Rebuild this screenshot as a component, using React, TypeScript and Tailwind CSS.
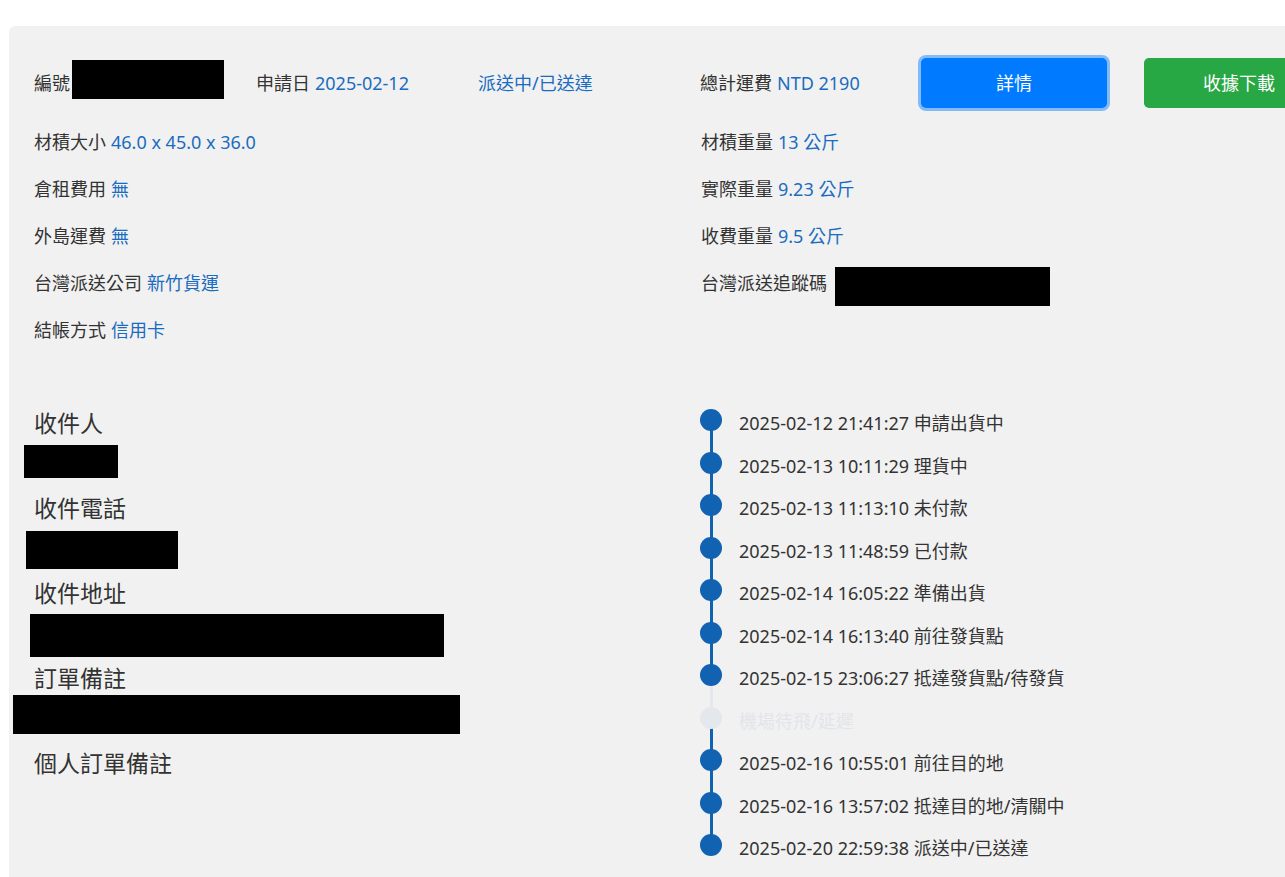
import React from "react"

const font = { fontFamily: '"Noto Sans", "Noto Sans CJK TC", sans-serif' }

type Step = { time?: string; label: string; done: boolean }

const steps: Step[] = [
  { time: "2025-02-12 21:41:27", label: "申請出貨中", done: true },
  { time: "2025-02-13 10:11:29", label: "理貨中", done: true },
  { time: "2025-02-13 11:13:10", label: "未付款", done: true },
  { time: "2025-02-13 11:48:59", label: "已付款", done: true },
  { time: "2025-02-14 16:05:22", label: "準備出貨", done: true },
  { time: "2025-02-14 16:13:40", label: "前往發貨點", done: true },
  { time: "2025-02-15 23:06:27", label: "抵達發貨點/待發貨", done: true },
  { label: "機場待飛/延遲", done: false },
  { time: "2025-02-16 10:55:01", label: "前往目的地", done: true },
  { time: "2025-02-16 13:57:02", label: "抵達目的地/清關中", done: true },
  { time: "2025-02-20 22:59:38", label: "派送中/已送達", done: true },
]

function Field({ label, value }: { label: string; value: string }) {
  return (
    <div className="flex h-[47px] items-center leading-none">
      <span className="text-[#333]">{label}</span>
      <span className="ml-[5px] text-[#1a6cc0]">{value}</span>
    </div>
  )
}

function Redact({ className }: { className: string }) {
  return <div className={`shrink-0 bg-black ${className}`} />
}

function Recipient() {
  return (
    <div className="pt-[4px] text-[23px] text-[#333]">
      <div className="h-[34px] leading-[34px]">收件人</div>
      <div className="flex h-[51px] flex-col">
        <Redact className="-ml-[10px] mt-[5px] h-[33px] w-[94px]" />
      </div>
      <div className="h-[34px] leading-[34px]">收件電話</div>
      <div className="flex h-[51px] flex-col">
        <Redact className="-ml-[8px] mt-[6px] h-[38px] w-[152px]" />
      </div>
      <div className="h-[34px] leading-[34px]">收件地址</div>
      <div className="flex h-[51px] flex-col">
        <Redact className="-ml-[4px] mt-[4px] h-[43px] w-[414px]" />
      </div>
      <div className="h-[34px] leading-[34px]">訂單備註</div>
      <div className="flex h-[51px] flex-col">
        <Redact className="-ml-[21px] h-[39px] w-[447px]" />
      </div>
      <div className="h-[34px] leading-[34px]">個人訂單備註</div>
    </div>
  )
}

function Timeline() {
  return (
    <div className="-ml-px">
      {steps.map((s, i) => (
        <div key={i} className="relative flex h-[42.5px] items-center">
          {i > 0 && (
            <div
              className={`absolute left-[9.5px] top-[-24.25px] z-0 h-[42.5px] w-[3px] ${
                s.done ? "bg-[#1162b0]" : "bg-[#e4e7eb]"
              }`}
            />
          )}
          <div
            className={`relative z-10 h-[22px] w-[22px] -translate-y-[3px] rounded-full ${
              s.done ? "bg-[#1162b0]" : "bg-[#e4e7eb]"
            }`}
          />
          <div
            className={`ml-[17px] text-[18px] leading-none ${
              s.done ? "text-[#333]" : "text-[#e2e5e9]"
            }`}
          >
            {s.time ? `${s.time} ${s.label}` : s.label}
          </div>
        </div>
      ))}
    </div>
  )
}

export default function App() {
  return (
    <div className="h-screen w-full overflow-hidden bg-white" style={font}>
      <div className="ml-[9px] mt-[26px] w-[1360px] rounded-tl-[6px] bg-[#f1f1f1] pb-[40px] pl-[25px] text-[18px]">
        {/* header row */}
        <div className="grid grid-cols-[222px_222px_222px_222px_222px_222px] pt-[32px]">
          <div className="flex h-[50px] items-center leading-none text-[#333]">
            編號
            <Redact className="ml-[2px] -mt-[7px] h-[39px] w-[152px]" />
          </div>
          <div className="flex h-[50px] items-center leading-none">
            <span className="text-[#333]">申請日</span>
            <span className="ml-[5px] text-[#1a6cc0]">2025-02-12</span>
          </div>
          <div className="flex h-[50px] items-center leading-none text-[#1a6cc0]">派送中/已送達</div>
          <div className="flex h-[50px] items-center leading-none">
            <span className="text-[#333]">總計運費</span>
            <span className="ml-[5px] text-[#1a6cc0]">NTD 2190</span>
          </div>
          <div>
            <button className="ml-[-1px] h-[50px] w-[186px] rounded-[5px] bg-[#007bff] text-[18px] text-white shadow-[0_0_0_3px_rgba(0,123,255,0.45)]">
              詳情
            </button>
          </div>
          <div>
            <button className="h-[50px] w-[190px] rounded-[5px] bg-[#28a745] text-[18px] text-white">
              收據下載
            </button>
          </div>
        </div>

        {/* detail rows */}
        <div className="mt-[10px] grid grid-cols-[667px_1fr]">
          <div>
            <Field label="材積大小" value="46.0 x 45.0 x 36.0" />
            <Field label="倉租費用" value="無" />
            <Field label="外島運費" value="無" />
            <Field label="台灣派送公司" value="新竹貨運" />
            <Field label="結帳方式" value="信用卡" />
          </div>
          <div>
            <Field label="材積重量" value="13 公斤" />
            <Field label="實際重量" value="9.23 公斤" />
            <Field label="收費重量" value="9.5 公斤" />
            <div className="flex h-[47px] items-center leading-none text-[#333]">
              台灣派送追蹤碼
              <Redact className="ml-[8px] self-end h-[39px] w-[215px]" />
            </div>
          </div>
        </div>

        {/* recipient + timeline */}
        <div className="mt-[49px] grid grid-cols-[667px_1fr]">
          <Recipient />
          <Timeline />
        </div>
      </div>
    </div>
  )
}
